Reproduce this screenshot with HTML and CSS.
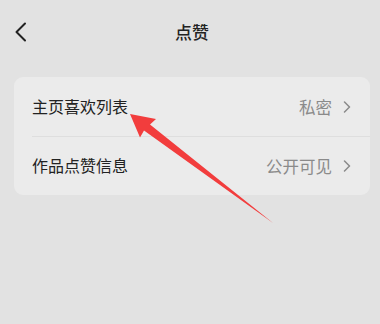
FILE: index.html
```html
<!DOCTYPE html>
<html lang="zh-CN">
<head>
<meta charset="utf-8">
<link rel="stylesheet" href="styles.css">
</head>
<body>
<div class="page">
  <header class="header">
    <div class="back">
      <svg width="14" height="20" viewBox="0 0 14 20"><path d="M11 1.5 L2.5 10 L11 18.5" fill="none" stroke="#222" stroke-width="2" stroke-linecap="round" stroke-linejoin="round"/></svg>
    </div>
    <div class="title">点赞</div>
    <div></div>
  </header>
  <section class="card">
    <div class="row">
      <span class="label">主页喜欢列表</span>
      <span class="value">私密<svg class="chev" width="8" height="12" viewBox="0 0 8 12"><path d="M1.5 1 L6.5 6 L1.5 11" fill="none" stroke="#8a8a8a" stroke-width="1.5" stroke-linecap="round" stroke-linejoin="round"/></svg></span>
    </div>
    <div class="row divided">
      <span class="label">作品点赞信息</span>
      <span class="value">公开可见<svg class="chev" width="8" height="12" viewBox="0 0 8 12"><path d="M1.5 1 L6.5 6 L1.5 11" fill="none" stroke="#8a8a8a" stroke-width="1.5" stroke-linecap="round" stroke-linejoin="round"/></svg></span>
    </div>
  </section>
  <svg class="arrow" width="380" height="324" viewBox="0 0 380 324">
    <polygon points="130,114 156,119 150,124.5 273,223 144,130.5 140,137.5" fill="#f23d3d"/>
  </svg>
</div>
</body>
</html>
```

FILE: styles.css
```css
html, body {
  margin: 0;
  padding: 0;
  background: #e2e2e2;
}
.page {
  position: relative;
  width: 380px;
  height: 324px;
  overflow: hidden;
  font-family: "Noto Sans CJK SC", "Noto Sans", sans-serif;
  color: #222;
}
.header {
  height: 64px;
  display: grid;
  grid-template-columns: 1fr auto 1fr;
  align-items: center;
}
.back {
  padding-left: 14px;
  display: flex;
  align-items: center;
  height: 20px;
}
.back svg { display: block; }
.title {
  font-size: 17px;
  font-weight: 500;
  line-height: 20px;
  padding-left: 4px;
}
.card {
  margin: 13px 10px 0 14px;
  background: #ebebeb;
  border-radius: 9px;
}
.row {
  height: 59px;
  display: flex;
  align-items: center;
  justify-content: space-between;
  padding: 0 19px 0 18px;
  font-size: 16px;
  position: relative;
}
.row.divided {
  height: 58px;
  border-top: 1px solid #dedede;
  margin-left: 18px;
  padding-left: 0;
}
.label {
  line-height: 20px;
  position: relative;
  top: -1px;
}
.value {
  color: #8a8a8a;
  display: flex;
  align-items: center;
  gap: 11px;
  font-size: 16.5px;
  line-height: 20px;
}
.chev { display: block; }
.arrow {
  position: absolute;
  left: 0;
  top: 0;
}
```
